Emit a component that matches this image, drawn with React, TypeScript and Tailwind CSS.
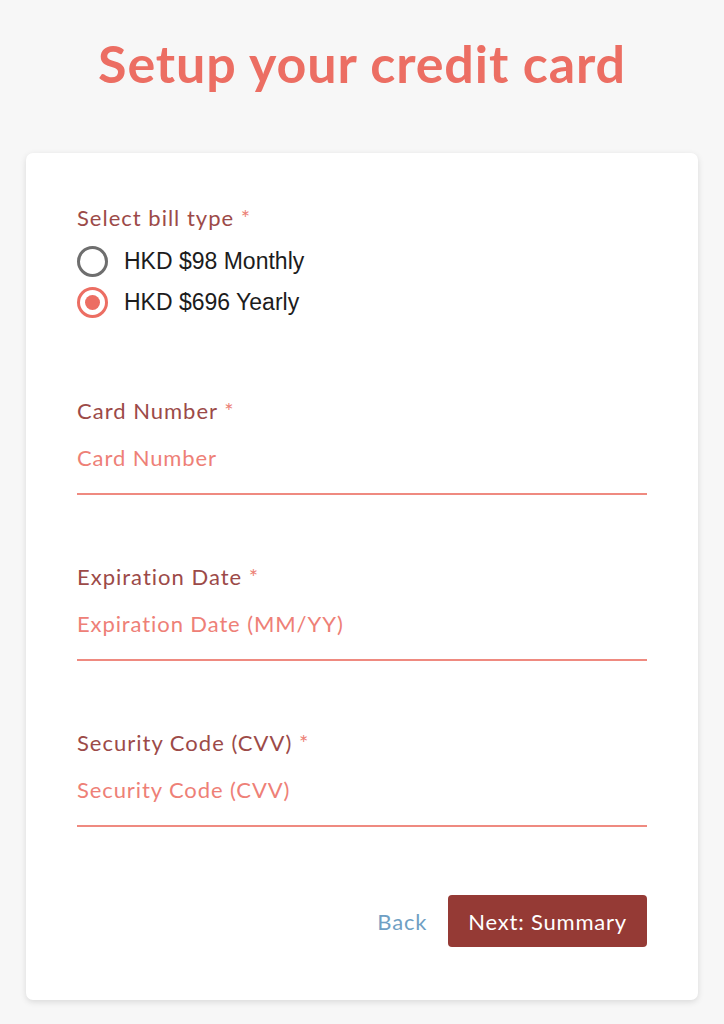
import React, { useState } from "react";

const Field = ({ label, placeholder }: { label: string; placeholder: string }) => (
  <div className="flex flex-col">
    <label className="text-[22px] leading-[28px] tracking-[1px] text-[#9c4a48]">
      {label} <span className="text-[#ec7f76]">*</span>
    </label>
    <input
      placeholder={placeholder}
      className="mt-[16px] h-[54px] w-full border-b-2 border-[#ef8a80] bg-transparent pb-[20px] text-[22px] tracking-[0.9px] text-[#ec6e63] outline-none placeholder:text-[#ee8077]"
      style={{ fontFamily: "Lato, sans-serif" }}
    />
  </div>
);

const Radio = ({ checked, label, onClick }: { checked: boolean; label: string; onClick: () => void }) => (
  <button onClick={onClick} className="flex h-[41px] items-center gap-[16px] text-left">
    <span
      className={
        checked
          ? "flex h-[31px] w-[31px] items-center justify-center rounded-full border-[3px] border-[#ec6e63]"
          : "flex h-[31px] w-[31px] items-center justify-center rounded-full border-[3px] border-[#6e6e6e]"
      }
    >
      {checked && <span className="h-[15px] w-[15px] rounded-full bg-[#ec6e63]" />}
    </span>
    <span className="text-[23px] text-[#1c1c1c]" style={{ fontFamily: "'Liberation Sans', Arial, sans-serif" }}>
      {label}
    </span>
  </button>
);

export default function App() {
  const [bill, setBill] = useState<"m" | "y">("y");
  return (
    <div className="min-h-[1024px] w-full bg-[#f7f7f7] pt-[28px]" style={{ fontFamily: "Lato, 'Noto Sans', sans-serif" }}>
      <h1 className="text-center text-[52px] font-bold leading-[70px] tracking-[0.9px] text-[#ec6e63]">
        Setup your credit card
      </h1>
      <div className="mx-[26px] mt-[55px] rounded-[7px] bg-white px-[51px] pb-[53px] pt-[51px] shadow-[0_2px_6px_rgba(0,0,0,0.12)]">
        <div className="flex flex-col">
          <label className="text-[22px] leading-[28px] tracking-[1px] text-[#9c4a48]">
            Select bill type <span className="text-[#ec7f76]">*</span>
          </label>
          <div className="mt-[9px] flex flex-col">
            <Radio checked={bill === "m"} label="HKD $98 Monthly" onClick={() => setBill("m")} />
            <Radio checked={bill === "y"} label="HKD $696 Yearly" onClick={() => setBill("y")} />
          </div>
        </div>
        <div className="mt-[74px] flex flex-col gap-[68px]">
          <Field label="Card Number" placeholder="Card Number" />
          <Field label="Expiration Date" placeholder="Expiration Date (MM/YY)" />
          <Field label="Security Code (CVV)" placeholder="Security Code (CVV)" />
        </div>
        <div className="mt-[68px] flex items-center justify-end gap-[21px]">
          <button className="text-[22px] tracking-[0.8px] text-[#6f9fc4]">Back</button>
          <button className="h-[52px] rounded-[4px] bg-[#953a35] px-[20px] text-[22px] tracking-[0.8px] text-white">
            Next: Summary
          </button>
        </div>
      </div>
    </div>
  );
}
